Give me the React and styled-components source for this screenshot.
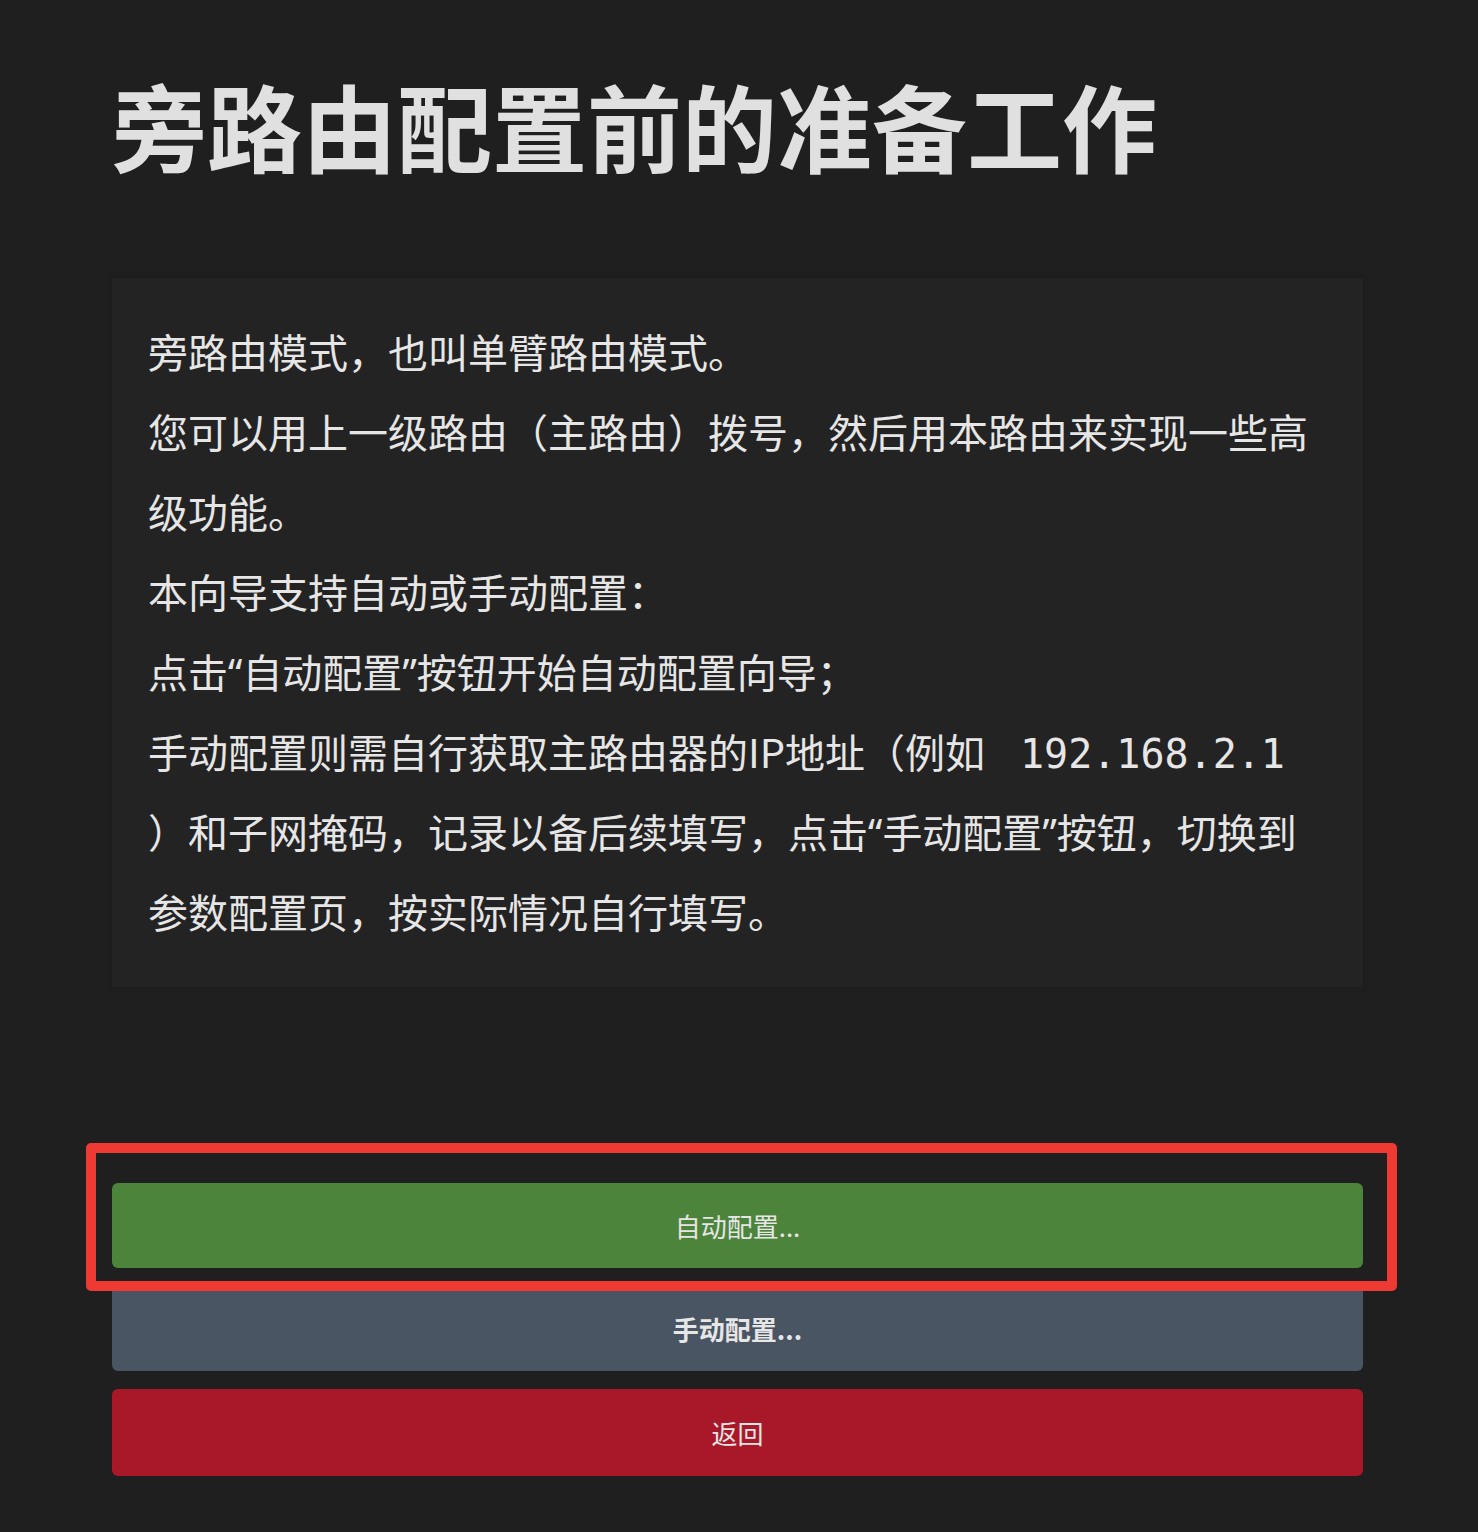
import React from 'react';
import styled, { createGlobalStyle } from 'styled-components';

const GlobalStyle = createGlobalStyle`
  html, body {
    margin: 0;
    padding: 0;
    background: #1f1f1f;
  }
  body {
    font-family: "Noto Sans CJK SC", "Noto Sans", sans-serif;
    color: #e4e4e4;
  }
`;

const Page = styled.div`
  width: 1251px;
  margin: 0 0 0 112px;
  padding: 68px 0 58px;
`;

const Title = styled.h1`
  margin: 0 0 96px;
  font-size: 95px;
  line-height: 114px;
  font-weight: 700;
  color: #e0e0e0;
`;

const Card = styled.div`
  background: #232323;
  padding: 33px 36px 36px;
  box-shadow: 0 0 6px rgba(0, 0, 0, 0.15);
`;

const Line = styled.p`
  margin: 0;
  font-size: 40px;
  line-height: 80px;
  color: #e6e6e6;
`;

const Quote = styled.span`
  font-family: "Noto Sans", "Liberation Sans", sans-serif;
  line-height: 1;
`;

const Code = styled.code`
  font-family: "DejaVu Sans Mono", "Liberation Mono", monospace;
  font-size: 40px;
  line-height: 1;
  padding: 0 26px;
`;

const Actions = styled.div`
  display: flex;
  flex-direction: column;
  gap: 18px;
  margin-top: 196px;
`;

const Highlight = styled.div`
  position: relative;

  &::after {
    content: '';
    position: absolute;
    top: -40px;
    left: -26px;
    right: -34px;
    bottom: -23px;
    border: 10px solid #ee3a33;
    border-radius: 5px;
    pointer-events: none;
  }
`;

const tones = {
  green: '#4d843c',
  slate: '#4a5564',
  red: '#a91828',
};

const Button = styled.button`
  display: block;
  width: 100%;
  height: ${p => (p.$tall ? 87 : 85)}px;
  border: none;
  border-radius: 6px;
  background: ${p => tones[p.$tone]};
  color: #e6e6e6;
  font-family: "Noto Sans CJK SC", "Noto Sans", sans-serif;
  font-size: 26px;
  font-weight: ${p => (p.$bold ? 700 : 400)};
  cursor: pointer;
`;

export default function App() {
  return (
    <>
      <GlobalStyle />
      <Page>
        <Title>旁路由配置前的准备工作</Title>
        <Card>
          <Line>旁路由模式，也叫单臂路由模式。</Line>
          <Line>您可以用上一级路由（主路由）拨号，然后用本路由来实现一些高级功能。</Line>
          <Line>本向导支持自动或手动配置：</Line>
          <Line>点击<Quote>“</Quote>自动配置<Quote>”</Quote>按钮开始自动配置向导；</Line>
          <Line>
            手动配置则需自行获取主路由器的IP地址（例如 <Code>192.168.2.1</Code> ）和子网掩码，记录以备后续填写，点击<Quote>“</Quote>手动配置<Quote>”</Quote>按钮，切换到参数配置页，按实际情况自行填写。
          </Line>
        </Card>
        <Actions>
          <Highlight>
            <Button $tone="green">自动配置...</Button>
          </Highlight>
          <Button $tone="slate" $bold>手动配置...</Button>
          <Button $tone="red" $tall>返回</Button>
        </Actions>
      </Page>
    </>
  );
}
